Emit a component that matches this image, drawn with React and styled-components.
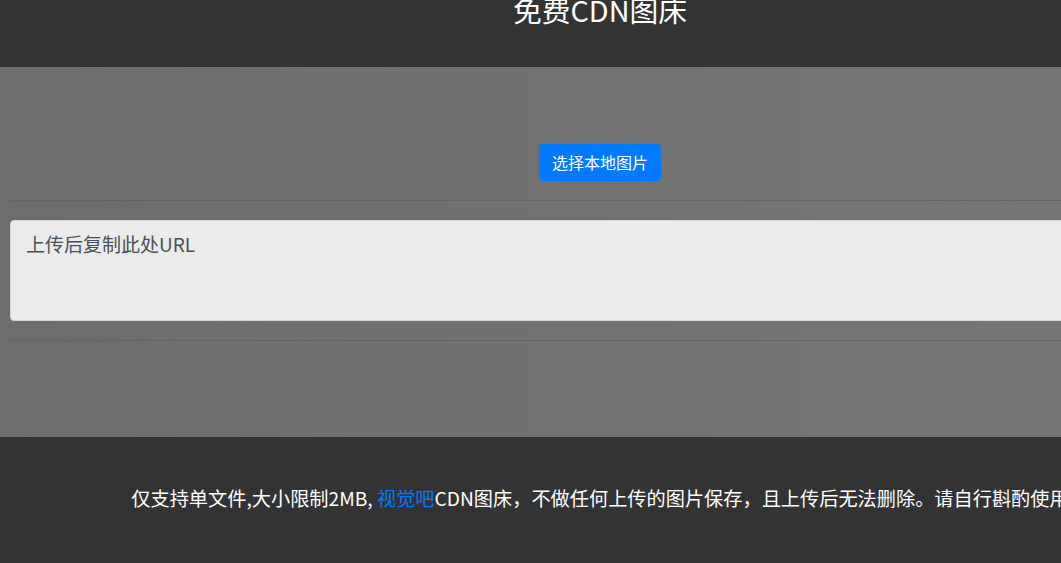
import React from "react";
import styled, { createGlobalStyle } from "styled-components";

const Global = createGlobalStyle`
  html, body {
    margin: 0;
    padding: 0;
    overflow: hidden;
    background: #333333;
  }
  body {
    font-family: "Noto Sans CJK SC", "Noto Sans", sans-serif;
  }
`;

const Page = styled.div`
  width: 1200px;
  display: flex;
  flex-direction: column;
`;

const Header = styled.header`
  height: 67px;
  background: #333333;
  display: flex;
  justify-content: center;
  align-items: flex-start;
  overflow: hidden;
`;

const Title = styled.h1`
  margin: -4px 0 0;
  font-size: 28.8px;
  line-height: 28px;
  font-weight: 400;
  color: #ffffff;
`;

const Main = styled.main`
  height: 370px;
  box-sizing: border-box;
  padding: 77px 10px 0;
  background: linear-gradient(to right, #6d6d6d, #777777);
  display: flex;
  flex-direction: column;
`;

const ButtonRow = styled.div`
  display: flex;
  justify-content: center;
`;

const PickButton = styled.button`
  height: 37px;
  padding: 0 13px;
  border: none;
  border-radius: 4px;
  background: #007bff;
  color: #ffffff;
  font-family: inherit;
  font-size: 16px;
  line-height: 37px;
  cursor: pointer;
`;

const Rule = styled.hr`
  margin: ${(p) => p.$top}px 0 ${(p) => p.$bottom}px;
  border: none;
  border-top: 1px solid #646464;
  height: 0;
`;

const UrlBox = styled.textarea`
  display: block;
  box-sizing: border-box;
  width: 100%;
  height: 101px;
  margin: 0;
  padding: 8px 15px;
  border: 1px solid #cfd6dd;
  border-radius: 4px;
  background: #ebebeb;
  color: #495057;
  font-family: inherit;
  font-size: 19px;
  line-height: 30px;
  resize: none;
  outline: none;
  &::placeholder {
    color: #495057;
    opacity: 1;
  }
`;

const Footer = styled.footer`
  height: 126px;
  background: #333333;
  display: flex;
  justify-content: center;
  align-items: center;
`;

const Notice = styled.p`
  margin: 0 0 4px;
  font-size: 19.2px;
  line-height: 28px;
  color: #ffffff;
  white-space: nowrap;
`;

const Link = styled.a`
  color: #007bff;
  text-decoration: none;
`;

export default function App() {
  return (
    <>
      <Global />
      <Page>
        <Header>
          <Title>免费CDN图床</Title>
        </Header>
        <Main>
          <ButtonRow>
            <PickButton>选择本地图片</PickButton>
          </ButtonRow>
          <Rule $top={19} $bottom={19} />
          <UrlBox placeholder="上传后复制此处URL" readOnly />
          <Rule $top={19} $bottom={0} />
        </Main>
        <Footer>
          <Notice>
            仅支持单文件,大小限制2MB, <Link href="#">视觉吧</Link>CDN图床，不做任何上传的图片保存，且上传后无法删除。请自行斟酌使用
          </Notice>
        </Footer>
      </Page>
    </>
  );
}
